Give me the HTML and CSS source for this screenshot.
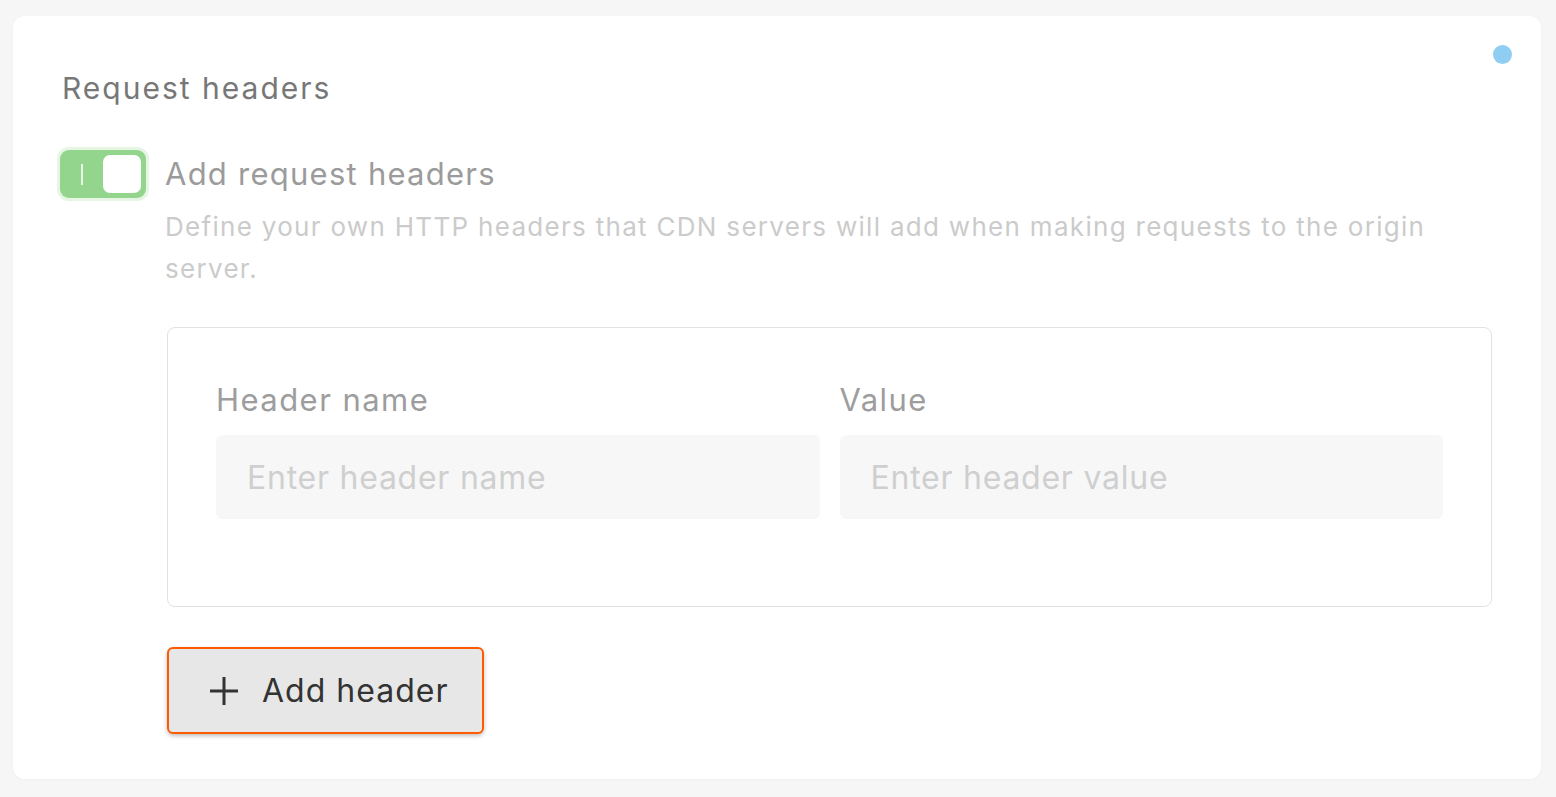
FILE: index.html
```html
<!DOCTYPE html>
<html>
<head>
<meta charset="utf-8">
<link rel="stylesheet" href="styles.css">
</head>
<body>
<div class="card">
  <span class="dot"></span>
  <h2 class="title">Request headers</h2>
  <div class="toggle-row">
    <div class="toggle"><span class="mark"></span><span class="knob"></span></div>
    <div class="toggle-text">
      <div class="toggle-label">Add request headers</div>
      <div class="desc">Define your own HTTP headers that CDN servers will add when making requests to the origin server.</div>
    </div>
  </div>
  <div class="body">
    <div class="box">
      <div class="field">
        <label class="label">Header name</label>
        <div class="input">Enter header name</div>
      </div>
      <div class="field">
        <label class="label">Value</label>
        <div class="input">Enter header value</div>
      </div>
    </div>
    <button class="btn"><svg class="plus" width="32" height="32" viewBox="0 0 32 32"><path d="M16 2V30M2 16H30" stroke="#333" stroke-width="3" fill="none"/></svg><span>Add header</span></button>
  </div>
</div>
</body>
</html>
```
FILE: styles.css
```css
html, body { margin: 0; padding: 0; }
body {
  background: #f6f6f6;
  width: 1556px;
  height: 797px;
  padding: 16px 15px 18px 13px;
  box-sizing: border-box;
  font-family: Inter, "Noto Sans", sans-serif;
}
.card {
  position: relative;
  background: #fff;
  border-radius: 12px;
  height: 763px;
  box-sizing: border-box;
  padding: 54px 49px 0 49px;
  box-shadow: 0 1px 3px rgba(0,0,0,0.03);
}
.dot {
  position: absolute;
  top: 29px;
  right: 29px;
  width: 19px;
  height: 19px;
  border-radius: 50%;
  background: #8fcdf2;
}
.title {
  margin: 0;
  font-size: 30px;
  font-weight: 400;
  color: #777;
  line-height: 36px;
  letter-spacing: 2px;
}
.toggle-row {
  display: flex;
  gap: 19px;
  margin-top: 44px;
}
.toggle {
  position: relative;
  width: 86px;
  height: 48px;
  border-radius: 9px;
  background: #93d58d;
  box-shadow: 0 0 0 3px #e6f5e4;
  flex: none;
  margin-left: -2px;
}
.mark {
  position: absolute;
  left: 21px;
  top: 14px;
  width: 2px;
  height: 21px;
  background: #e8f7e6;
}
.knob {
  position: absolute;
  right: 5px;
  top: 5px;
  width: 38px;
  height: 38px;
  border-radius: 7px;
  background: #fff;
}
.toggle-label {
  font-size: 31px;
  color: #9b9b9b;
  line-height: 48px;
  letter-spacing: 1.25px;
}
.desc {
  font-size: 26px;
  color: #cbcbcb;
  line-height: 42px;
  margin-top: 8px;
  width: 1290px;
  letter-spacing: 1.3px;
}
.body {
  padding-left: 105px;
  padding-top: 37px;
}
.box {
  border: 1px solid #e2e2e2;
  border-radius: 8px;
  height: 280px;
  box-sizing: border-box;
  padding: 54px 48px 0 48px;
  display: flex;
  gap: 20px;
}
.field { flex: 1; }
.label {
  display: block;
  font-size: 31px;
  color: #9d9d9d;
  line-height: 36px;
  margin-bottom: 17px;
  letter-spacing: 1.45px;
}
.input {
  height: 84px;
  background: #f7f7f7;
  border-radius: 6px;
  font-size: 32px;
  color: #cfcfcf;
  padding-left: 31px;
  display: flex;
  align-items: center;
  letter-spacing: 0.75px;
}
.btn {
  margin-top: 40px;
  width: 317px;
  height: 87px;
  background: #e7e7e7;
  border: 2px solid #ff5a00;
  border-radius: 6px;
  box-shadow: 0 2px 4px rgba(0,0,0,0.25);
  display: flex;
  align-items: center;
  padding: 0 0 0 39px;
  gap: 22px;
  font-family: Inter, sans-serif;
  font-size: 32px;
  letter-spacing: 1px;
  color: #333;
  cursor: pointer;
}
.plus { flex: none; }
```
